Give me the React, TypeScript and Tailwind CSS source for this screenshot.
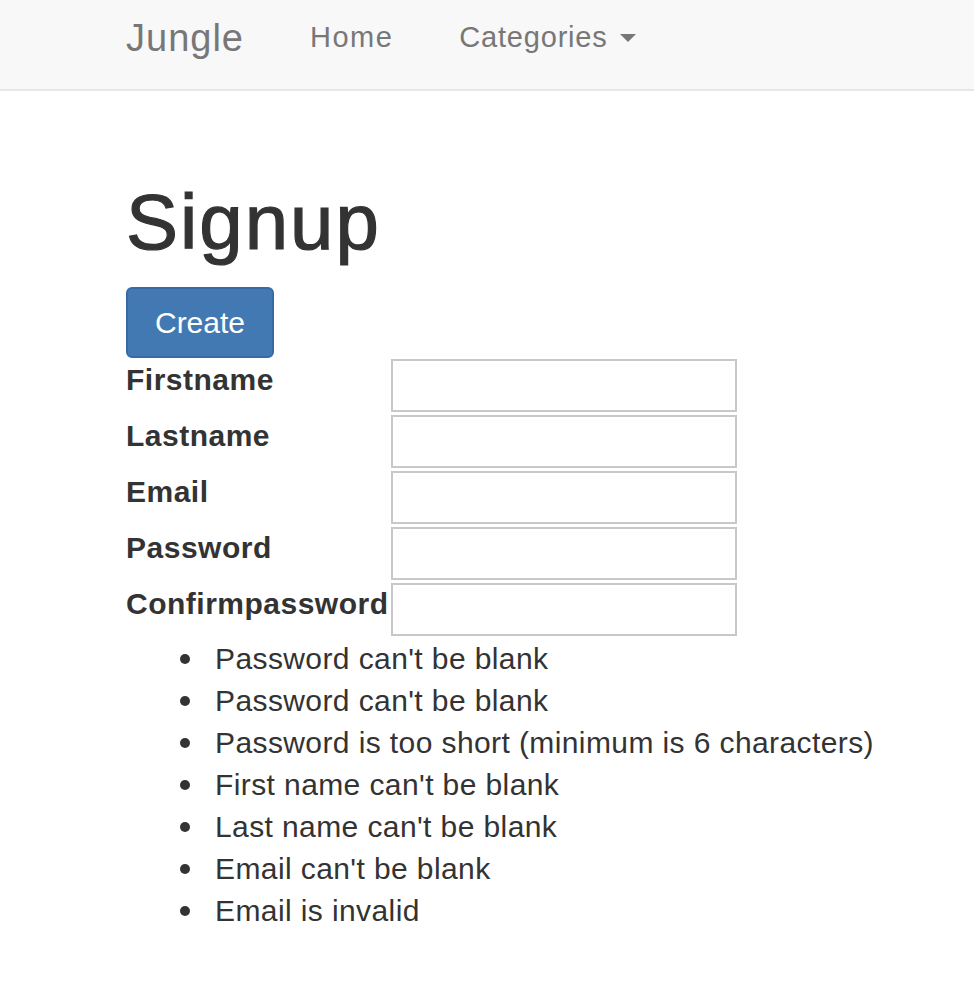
import React from 'react';

const fields = ['Firstname', 'Lastname', 'Email', 'Password', 'Confirmpassword'];

const errors = [
  "Password can't be blank",
  "Password can't be blank",
  'Password is too short (minimum is 6 characters)',
  "First name can't be blank",
  "Last name can't be blank",
  "Email can't be blank",
  'Email is invalid',
];

const App = () => {
  return (
    <div className="min-h-screen bg-white text-[#333] font-['Liberation_Sans',Arial,sans-serif]">
      <nav className="h-[91px] bg-[#f8f8f8] border-b-2 border-[#e7e7e7]">
        <div className="flex items-center h-[76px] pl-[126px] text-[#777]">
          <span className="text-[38px] tracking-[1px]">Jungle</span>
          <span className="ml-[66px] text-[29px] tracking-[1.5px]">Home</span>
          <span className="ml-[66px] text-[29px] tracking-[0.8px] flex items-center">
            Categories
            <span className="ml-[12px] w-0 h-0 border-l-[8px] border-r-[8px] border-t-[8px] border-l-transparent border-r-transparent border-t-[#777]" />
          </span>
        </div>
      </nav>

      <main className="pl-[126px]">
        <h1 className="mt-[91px] text-[78px] leading-[80px] font-normal tracking-[2px] [-webkit-text-stroke:1.2px_#333]">Signup</h1>
        <form className="mt-[25px]">
          <button
            type="button"
            className="w-[148px] h-[71px] bg-[#4379b2] border-2 border-[#376ba3] rounded-[6px] text-white text-[30px]"
          >
            Create
          </button>
          <div className="grid grid-cols-[265px_346px] gap-y-[3px] mt-[1px]">
            {fields.map((f) => (
              <React.Fragment key={f}>
                <label className="font-bold text-[30px] leading-[42px] whitespace-nowrap tracking-[0.5px]">{f}</label>
                <input className="h-[53px] border-2 border-[#c8c8c8] bg-white" />
              </React.Fragment>
            ))}
          </div>
        </form>
        <ul className="pl-[54px] mt-[2px] text-[30px] leading-[42px] tracking-[0.4px]">
          {errors.map((e, i) => (
            <li key={i} className="flex items-center">
              <span className="w-[10px] h-[10px] rounded-full bg-[#333] mr-[25px]" />
              {e}
            </li>
          ))}
        </ul>
      </main>
    </div>
  );
};

export default App;
